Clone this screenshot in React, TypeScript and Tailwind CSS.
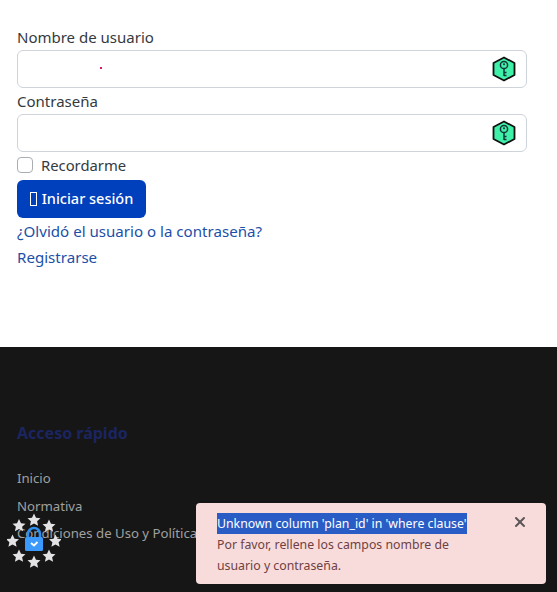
import { X } from 'lucide-react'

function KeyBadge() {
  return (
    <svg width="24" height="26" viewBox="0 0 24 26" className="shrink-0">
      <polygon points="12,1.5 22.5,7 22.5,19 12,24.5 1.5,19 1.5,7" fill="#3ff0a8" stroke="#111" strokeWidth="1.8" strokeLinejoin="round" />
      <circle cx="12" cy="9" r="3.6" fill="none" stroke="#17343a" strokeWidth="1.5" />
      <circle cx="12" cy="8.2" r="1" fill="#17343a" />
      <path d="M12 12.6V20M12 16.4H14.5M12 19.4H14.5" fill="none" stroke="#17343a" strokeWidth="1.5" />
    </svg>
  )
}

function Field({ label, dot }: { label: string; dot?: boolean }) {
  return (
    <div>
      <label className="block h-6 leading-[22px]">{label}</label>
      <div className="relative flex h-[38px] items-center justify-end rounded-md border border-[#ced4da] bg-white pr-[10px]">
        {dot && <span className="absolute left-[82px] top-[16px] h-[2px] w-[2px] bg-[#e0156b]" />}
        <KeyBadge />
      </div>
    </div>
  )
}

function Star({ x, y }: { x: number; y: number }) {
  return <polygon transform={`translate(${x} ${y})`} points="0,-6.5 2,-2.2 6.5,-1.8 3.1,1.2 4.1,5.8 0,3.4 -4.1,5.8 -3.1,1.2 -6.5,-1.8 -2,-2.2" fill="#e3e3e6" />
}

function TrustBadge() {
  const stars = [
    [27, 7], [42, 13], [48.5, 28], [42, 43], [27, 49], [12, 43], [5.5, 28], [12, 12.5]
  ]
  return (
    <svg width="54" height="56" viewBox="0 0 54 56" className="absolute left-[7px] top-[513px]">
      {stars.map(([x, y]) => <Star key={`${x}-${y}`} x={x} y={y} />)}
      <path d="M21 24v-3a6 6 0 0 1 12 0v3" fill="none" stroke="#2f8ff0" strokeWidth="2.5" />
      <rect x="18" y="24" width="18" height="14" rx="1.5" fill="#3b99fc" />
      <path d="M24 30l3 2.5 3.5-3.5" fill="none" stroke="#fff" strokeWidth="1.8" />
    </svg>
  )
}

export default function App() {
  return (
    <div className="relative h-[592px] w-[557px] overflow-hidden bg-white text-[15px] text-[#333a40] font-['Noto_Sans','Open_Sans',sans-serif]">
      <main className="h-[347px] px-[17px] pt-[25px]">
        <div className="w-[510px]">
          <div className="pt-px">
            <Field label="Nombre de usuario" dot />
          </div>
          <div className="mt-[2px]">
            <Field label="Contraseña" />
          </div>
          <div className="mt-[1px] flex h-6 items-center gap-2">
            <span className="h-4 w-4 rounded-[4px] border border-[#a9aeb3] bg-white" />
            <span className="text-[14.8px]">Recordarme</span>
          </div>
          <button className="mt-[3px] flex h-[38px] w-[129px] items-center justify-center gap-[5px] rounded-md bg-[#0040bd] text-[14.5px] font-medium text-white">
            <span className="h-[14px] w-[7px] border border-white" />
            Iniciar sesión
          </button>
          <div className="flex flex-col text-[#1c4fa8] text-[15.1px]">
            <a className="h-[26px] leading-[26px]">¿Olvidó el usuario o la contraseña?</a>
            <a className="h-[26px] leading-[26px]">Registrarse</a>
          </div>
        </div>
      </main>

      <footer className="h-[245px] bg-[#161616] px-[17px] pt-[74px] text-[13.2px] text-[#a0a0a0]">
        <h2 className="h-6 text-[16px] font-bold leading-6 text-[#1b2560]">Acceso rápido</h2>
        <ul className="mt-[20px] flex flex-col">
          <li className="h-[27.5px] leading-[27.5px]">Inicio</li>
          <li className="h-[27.5px] leading-[27.5px]">Normativa</li>
          <li className="h-[27.5px] whitespace-nowrap leading-[27.5px]">Condiciones de Uso y Política</li>
        </ul>
      </footer>

      <TrustBadge />

      <div className="absolute left-[196px] top-[503px] h-[81px] w-[350px] rounded bg-[#f8dcdc] pl-[21px] pt-[10px] text-[12.3px] leading-[21px] text-[#6f3f43]">
        <div className="w-fit bg-[#2a5cc6] text-white">Unknown column 'plan_id' in 'where clause'</div>
        <p className="w-[250px]">Por favor, rellene los campos nombre de usuario y contraseña.</p>
        <X className="absolute right-[18px] top-[11px] text-[#5c5556]" size={16} strokeWidth={3} />
      </div>
    </div>
  )
}
